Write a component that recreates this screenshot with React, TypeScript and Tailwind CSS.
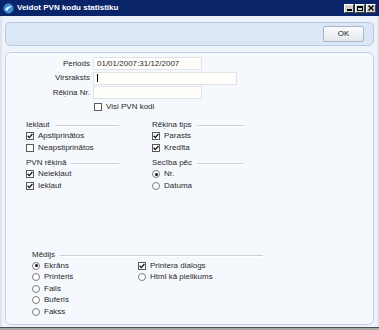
const Check = ({ on }: { on?: boolean }) => (
  <span className="w-[8px] h-[8px] border border-[#5b5b5b] bg-white flex items-center justify-center shrink-0">
    {on && (
      <svg width="6" height="6" viewBox="0 0 6 6">
        <path d="M0.6 2.8 L2.3 4.6 L5.4 1" stroke="#111" strokeWidth="1.3" fill="none" />
      </svg>
    )}
  </span>
);

const Radio = ({ on }: { on?: boolean }) => (
  <span className="w-[8px] h-[8px] rounded-full border border-[#7d7d7d] bg-white flex items-center justify-center shrink-0">
    {on && <span className="w-[3px] h-[3px] rounded-full bg-[#111]" />}
  </span>
);

const Item = ({ kind, on, label, h = "h-[12px]" }: { kind: "c" | "r"; on?: boolean; label: string; h?: string }) => (
  <div className={`flex items-center gap-[4px] ${h}`}>
    {kind === "c" ? <Check on={on} /> : <Radio on={on} />}
    <span>{label}</span>
  </div>
);

const Heading = ({ text }: { text: string }) => (
  <div className="flex items-center gap-[5px] h-[10px]">
    <span>{text}</span>
    <span className="flex-1 h-[2px] mt-[2px] border-t border-[#cdd0d5] border-b border-b-white" />
  </div>
);

export default function App() {
  return (
    <div className="w-[379px] h-[330px] overflow-hidden bg-[#dfe3ea] flex flex-col text-[8px] leading-none text-[#2a2a2a] font-['Liberation_Sans',Arial,sans-serif]">
      {/* title bar */}
      <div className="h-[16px] bg-[#0a246a] flex items-center pl-[3px] pr-[3px] shrink-0">
        <svg width="11" height="11" viewBox="0 0 11 11">
          <circle cx="5.5" cy="5.5" r="5" fill="#3d8fd6" />
          <path d="M2 6.5 Q5 2 9.5 3.5 Q6 4 4 8 Z" fill="#e9f4ff" />
          <circle cx="5.5" cy="5.5" r="5" fill="none" stroke="#1c4f8c" strokeWidth="0.8" />
        </svg>
        <span className="ml-[3px] text-white font-bold">Veidot PVN kodu statistiku</span>
        <div className="ml-auto flex gap-[1px]">
          {["min", "max", "close"].map((k) => (
            <span key={k} className="w-[10px] h-[9px] bg-[#d4d0c8] border border-t-white border-l-white border-r-[#404040] border-b-[#404040] flex items-center justify-center">
              {k === "min" && <span className="w-[5px] h-[2px] bg-black mt-[4px]" />}
              {k === "max" && <span className="w-[6px] h-[5px] border border-black border-t-2" />}
              {k === "close" && (
                <svg width="6" height="6" viewBox="0 0 6 6">
                  <path d="M0.5 0.5 L5.5 5.5 M5.5 0.5 L0.5 5.5" stroke="#000" strokeWidth="1.4" />
                </svg>
              )}
            </span>
          ))}
        </div>
      </div>

      {/* body */}
      <div className="flex-1 mx-[2px] bg-[#eef3fb] px-[3px] pt-[6px] flex flex-col">
        {/* toolbar */}
        <div className="h-[24px] rounded-[5px] border border-[#b9cae5] bg-[#dbe6f6] flex items-center justify-end pr-[9px] shrink-0">
          <button className="w-[41px] h-[16px] rounded-[2px] border border-[#a9b5c6] bg-gradient-to-b from-[#fbfcfd] to-[#e4e8ee] text-[8px] text-[#222]">
            OK
          </button>
        </div>

        {/* main panel */}
        <div className="mt-[6px] h-[273px] rounded-[6px] border border-[#c3d1e6] bg-[#f5f8fd] shrink-0">
          <div className="pt-[4px] grid grid-cols-[84px_1fr] gap-x-[3px] gap-y-[1.5px] items-center">
            <span className="text-right">Periods</span>
            <div className="w-[109px] h-[13px] border border-[#dfe2e7] bg-[#fffefb] flex items-center pl-[3px]">
              01/01/2007:31/12/2007
            </div>
            <span className="text-right">Virsraksts</span>
            <div className="w-[144px] h-[13px] border border-[#dfe2e7] bg-[#fffefb] flex items-center pl-[3px]">
              <span className="w-px h-[8px] bg-black" />
            </div>
            <span className="text-right">Rēķina Nr.</span>
            <div className="w-[109px] h-[13px] border border-[#dfe2e7] bg-[#fffefb]" />
          </div>

          <div className="mt-[3px] pl-[88px]">
            <Item kind="c" label="Visi PVN kodi" h="h-[10px]" />
          </div>

          {/* groups */}
          <div className="mt-[8px] pl-[20px] flex gap-[33px]">
            <div className="w-[93px] flex flex-col">
              <Heading text="Iekļaut" />
              <Item kind="c" on label="Apstiprinātos" />
              <Item kind="c" label="Neapstiprinātos" />
              <div className="mt-[4px]">
                <Heading text="PVN rēķinā" />
              </div>
              <Item kind="c" on label="Neiekļaut" />
              <Item kind="c" on label="Iekļaut" />
            </div>
            <div className="w-[92px] flex flex-col">
              <Heading text="Rēķina tips" />
              <Item kind="c" on label="Parasts" />
              <Item kind="c" on label="Kredīta" />
              <div className="mt-[4px]">
                <Heading text="Secība pēc" />
              </div>
              <Item kind="r" on label="Nr." />
              <Item kind="r" label="Datuma" />
            </div>
          </div>

          {/* media */}
          <div className="mt-[58px] pl-[26px] w-[257px]">
            <Heading text="Mēdijs" />
            <div className="flex">
              <div className="w-[106px] flex flex-col">
                <Item kind="r" on label="Ekrāns" h="h-[11.5px]" />
                <Item kind="r" label="Printeris" h="h-[11.5px]" />
                <Item kind="r" label="Fails" h="h-[11.5px]" />
                <Item kind="r" label="Buferis" h="h-[11.5px]" />
                <Item kind="r" label="Fakss" h="h-[11.5px]" />
              </div>
              <div className="flex flex-col">
                <Item kind="c" on label="Printera dialogs" h="h-[11.5px]" />
                <Item kind="r" label="Html kā pielikums" h="h-[11.5px]" />
              </div>
            </div>
          </div>
        </div>
      </div>
      <div className="h-px bg-[#4f4f4f] shrink-0" />
      <div className="h-[2px] bg-[#a8a8a8] shrink-0" />
    </div>
  );
}
